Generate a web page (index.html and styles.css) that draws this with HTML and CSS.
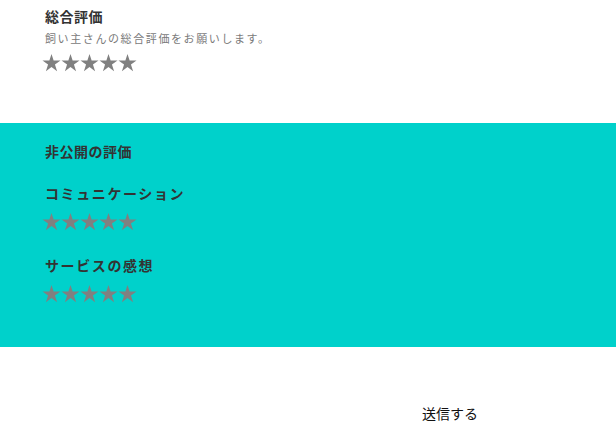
FILE: index.html
```html
<!DOCTYPE html>
<html lang="ja">
<head>
<meta charset="utf-8">
<link rel="stylesheet" href="styles.css">
</head>
<body>
<section class="overall">
  <h2 class="title">総合評価</h2>
  <p class="desc">飼い主さんの総合評価をお願いします。</p>
  <div class="stars">
    <svg viewBox="0 0 20 20"><path d="M10 1L12.245 7.91L19.51 7.91L13.63 12.18L15.88 19.09L10 14.82L4.12 19.09L6.37 12.18L0.49 7.91L7.755 7.91Z"/></svg>
    <svg viewBox="0 0 20 20"><path d="M10 1L12.245 7.91L19.51 7.91L13.63 12.18L15.88 19.09L10 14.82L4.12 19.09L6.37 12.18L0.49 7.91L7.755 7.91Z"/></svg>
    <svg viewBox="0 0 20 20"><path d="M10 1L12.245 7.91L19.51 7.91L13.63 12.18L15.88 19.09L10 14.82L4.12 19.09L6.37 12.18L0.49 7.91L7.755 7.91Z"/></svg>
    <svg viewBox="0 0 20 20"><path d="M10 1L12.245 7.91L19.51 7.91L13.63 12.18L15.88 19.09L10 14.82L4.12 19.09L6.37 12.18L0.49 7.91L7.755 7.91Z"/></svg>
    <svg viewBox="0 0 20 20"><path d="M10 1L12.245 7.91L19.51 7.91L13.63 12.18L15.88 19.09L10 14.82L4.12 19.09L6.37 12.18L0.49 7.91L7.755 7.91Z"/></svg>
  </div>
</section>
<section class="private">
  <h2 class="title">非公開の評価</h2>
  <div class="item">
    <h3 class="item-title">コミュニケーション</h3>
    <div class="stars">
      <svg viewBox="0 0 20 20"><path d="M10 1L12.245 7.91L19.51 7.91L13.63 12.18L15.88 19.09L10 14.82L4.12 19.09L6.37 12.18L0.49 7.91L7.755 7.91Z"/></svg>
      <svg viewBox="0 0 20 20"><path d="M10 1L12.245 7.91L19.51 7.91L13.63 12.18L15.88 19.09L10 14.82L4.12 19.09L6.37 12.18L0.49 7.91L7.755 7.91Z"/></svg>
      <svg viewBox="0 0 20 20"><path d="M10 1L12.245 7.91L19.51 7.91L13.63 12.18L15.88 19.09L10 14.82L4.12 19.09L6.37 12.18L0.49 7.91L7.755 7.91Z"/></svg>
      <svg viewBox="0 0 20 20"><path d="M10 1L12.245 7.91L19.51 7.91L13.63 12.18L15.88 19.09L10 14.82L4.12 19.09L6.37 12.18L0.49 7.91L7.755 7.91Z"/></svg>
      <svg viewBox="0 0 20 20"><path d="M10 1L12.245 7.91L19.51 7.91L13.63 12.18L15.88 19.09L10 14.82L4.12 19.09L6.37 12.18L0.49 7.91L7.755 7.91Z"/></svg>
    </div>
  </div>
  <div class="item">
    <h3 class="item-title">サービスの感想</h3>
    <div class="stars">
      <svg viewBox="0 0 20 20"><path d="M10 1L12.245 7.91L19.51 7.91L13.63 12.18L15.88 19.09L10 14.82L4.12 19.09L6.37 12.18L0.49 7.91L7.755 7.91Z"/></svg>
      <svg viewBox="0 0 20 20"><path d="M10 1L12.245 7.91L19.51 7.91L13.63 12.18L15.88 19.09L10 14.82L4.12 19.09L6.37 12.18L0.49 7.91L7.755 7.91Z"/></svg>
      <svg viewBox="0 0 20 20"><path d="M10 1L12.245 7.91L19.51 7.91L13.63 12.18L15.88 19.09L10 14.82L4.12 19.09L6.37 12.18L0.49 7.91L7.755 7.91Z"/></svg>
      <svg viewBox="0 0 20 20"><path d="M10 1L12.245 7.91L19.51 7.91L13.63 12.18L15.88 19.09L10 14.82L4.12 19.09L6.37 12.18L0.49 7.91L7.755 7.91Z"/></svg>
      <svg viewBox="0 0 20 20"><path d="M10 1L12.245 7.91L19.51 7.91L13.63 12.18L15.88 19.09L10 14.82L4.12 19.09L6.37 12.18L0.49 7.91L7.755 7.91Z"/></svg>
    </div>
  </div>
</section>
<footer class="actions">
  <button class="submit" type="button">送信する</button>
</footer>
</body>
</html>
```
FILE: styles.css
```css
* { box-sizing: border-box; }
html, body {
  margin: 0;
  padding: 0;
  background: #fff;
  font-family: "Noto Sans CJK JP", "Noto Sans", sans-serif;
  color: #333;
}
.overall {
  height: 123px;
  padding: 6px 0 0 45px;
}
.title {
  margin: 0;
  font-size: 14px;
  line-height: 20px;
  font-weight: bold;
  color: #333;
  letter-spacing: 0.5px;
}
.desc {
  margin: 4px 0 0;
  font-size: 11px;
  line-height: 16px;
  color: #7a7a7a;
  letter-spacing: 1.6px;
}
.stars {
  display: flex;
  margin-left: -3px;
  margin-top: 7px;
}
.stars svg {
  width: 19px;
  height: 19px;
  fill: #808080;
  display: block;
}
.private {
  height: 224px;
  background: #00d1cb;
  padding: 18px 0 0 45px;
}
.item {
  margin-top: 22px;
}
.item + .item {
  margin-top: 24px;
}
.item-title {
  margin: 0;
  font-size: 14px;
  line-height: 20px;
  font-weight: bold;
  color: #333;
  letter-spacing: 1.6px;
}
.item .stars {
  margin-top: 9px;
}
.actions {
  display: flex;
  justify-content: flex-end;
  padding: 56px 138px 0 0;
}
.submit {
  background: none;
  border: none;
  padding: 0;
  font-family: "Noto Sans CJK JP", sans-serif;
  font-size: 14px;
  line-height: 20px;
  color: #111;
  cursor: pointer;
}
```
